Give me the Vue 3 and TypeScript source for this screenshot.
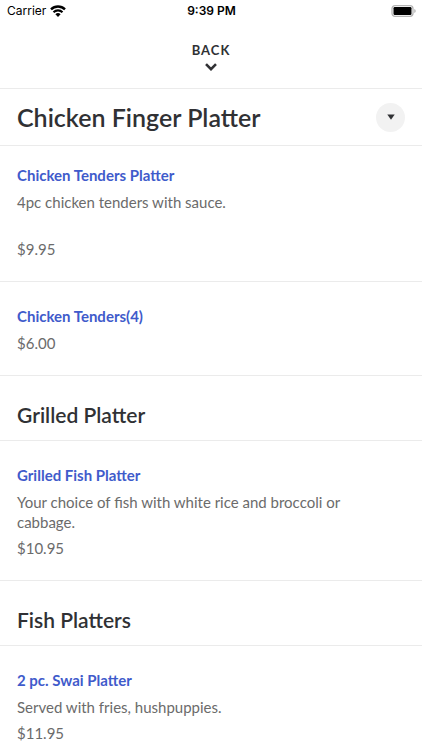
<script setup lang="ts">
interface Dish { name: string; description?: string; price: string; spaced?: boolean }
interface Section { title: string; dishes: Dish[] }

const sections: Section[] = [
  {
    title: 'Chicken Finger Platter',
    dishes: [
      { name: 'Chicken Tenders Platter', description: '4pc chicken tenders with sauce.', price: '$9.95', spaced: true },
      { name: 'Chicken Tenders(4)', price: '$6.00' },
    ],
  },
  {
    title: 'Grilled Platter',
    dishes: [{ name: 'Grilled Fish Platter', description: 'Your choice of fish with white rice and broccoli or cabbage.', price: '$10.95' }],
  },
  {
    title: 'Fish Platters',
    dishes: [{ name: '2 pc. Swai Platter', description: 'Served with fries, hushpuppies.', price: '$11.95' }],
  },
]
</script>

<template>
  <div class="screen">
    <div class="status">
      <div class="carrier">
        <span>Carrier</span>
        <svg width="16" height="12" viewBox="0 0 16 12" aria-hidden="true">
          <path d="M1 4.4a10 10 0 0 1 14 0" fill="none" stroke="#000" stroke-width="2.4" />
          <path d="M3.5 7.2a6.4 6.4 0 0 1 9 0" fill="none" stroke="#000" stroke-width="2.1" />
          <path d="M8 12 5.4 9.3a3.8 3.8 0 0 1 5.2 0z" />
        </svg>
      </div>
      <span class="time">9:39 PM</span>
      <svg class="battery" width="25" height="12" viewBox="0 0 25 12" aria-hidden="true">
        <rect x="1" y=".7" width="21" height="10.6" rx="3" fill="none" stroke="#b5b5b5" stroke-width="1.3" />
        <rect x="2.5" y="2" width="18" height="8" rx="1.2" />
        <path d="M23.4 4v4c1.6-.6 1.6-3.4 0-4z" fill="#a5a5a5" />
      </svg>
    </div>
    <button class="back" type="button">
      <span>BACK</span>
      <svg width="12" height="8" viewBox="0 0 12 8" aria-hidden="true">
        <path d="m1 1.2 5 5 5-5" fill="none" stroke="#303134" stroke-width="2.6" />
      </svg>
    </button>
    <main>
      <section v-for="(section, i) in sections" :key="section.title">
        <header :class="i === 0 ? 'top' : 'sub'">
          <h1 v-if="i === 0">{{ section.title }}</h1>
          <h2 v-else>{{ section.title }}</h2>
          <button v-if="i === 0" class="toggle" type="button" aria-label="Choose a section">
            <svg width="8" height="6" viewBox="0 0 8 6" aria-hidden="true"><path d="M.3.5h7.4L4 5.7z" fill="#303134" /></svg>
          </button>
        </header>
        <article v-for="dish in section.dishes" :key="dish.name" :class="{ spaced: dish.spaced }">
          <a href="#">{{ dish.name }}</a>
          <p v-if="dish.description">{{ dish.description }}</p>
          <p class="price">{{ dish.price }}</p>
        </article>
      </section>
    </main>
  </div>
</template>

<style>
body { background: #fff; }
html { scrollbar-width: none; }
</style>

<style scoped>
.screen { font-family: Lato, sans-serif; color: #303134; background: #fff; }
.status {
  display: grid; grid-template-columns: 1fr auto 1fr; align-items: center;
  height: 22px; padding: 0 6px 0 7px; color: #000;
  font: 12px/16px Inter, sans-serif;
}
.carrier { display: flex; align-items: center; gap: 4px; }
.time { font-weight: 600; }
.battery { justify-self: end; }
button { border: 0; padding: 0; font-family: inherit; color: inherit; cursor: pointer; }
.back {
  display: flex; flex-direction: column; align-items: center; gap: 5px;
  width: 100%; height: 66px; padding-top: 20px; background: #fff;
  font-size: 13px; line-height: 16px; font-weight: 700; letter-spacing: 1px;
}
header { display: flex; align-items: center; justify-content: space-between; border-bottom: 1px solid #ebebeb; padding: 0 17px; }
.top { border-top: 1px solid #ebebeb; height: 56px; }
.sub { height: 64px; align-items: flex-end; }
h1, h2, p { margin: 0; }
h1 { font-size: 25px; line-height: 32px; font-weight: 600; }
h2 { font-size: 21px; line-height: 26px; font-weight: 600; padding-bottom: 12px; }
.toggle { display: flex; align-items: center; justify-content: center; width: 29px; height: 29px; border-radius: 50%; background: #f2f2f2; }
article { padding: 24px 24px 22px 17px; border-bottom: 1px solid #ebebeb; }
.spaced { padding-top: 19px; }
a { display: block; color: #3f5bcb; text-decoration: none; font-size: 15px; line-height: 20px; font-weight: 700; }
p { margin-top: 6px; color: #6b6b6b; font-size: 15px; line-height: 20px; }
a + p { margin-top: 7px; }
.spaced .price { margin-top: 27px; }
</style>
